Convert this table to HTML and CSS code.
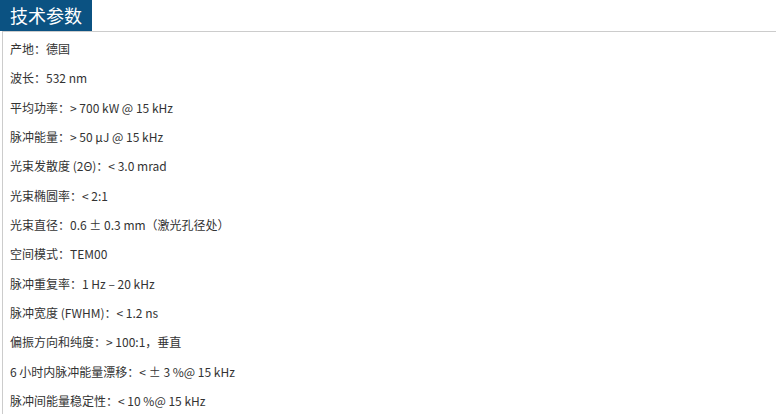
FILE: index.html
```html
<!DOCTYPE html>
<html lang="zh">
<head>
<meta charset="utf-8">
<link rel="stylesheet" href="styles.css">
</head>
<body>
<div class="spec">
  <div class="spec-head"><h2 class="spec-title">技术参数</h2></div>
  <div class="spec-body">
    <p>产地：德国</p>
    <p>波长：532 nm</p>
    <p>平均功率：&gt; 700 kW @ 15 kHz</p>
    <p>脉冲能量：&gt; 50 μJ @ 15 kHz</p>
    <p>光束发散度 (2Θ)：&lt; 3.0 mrad</p>
    <p>光束椭圆率：&lt; 2:1</p>
    <p>光束直径：0.6 ± 0.3 mm（激光孔径处）</p>
    <p>空间模式：TEM00</p>
    <p>脉冲重复率：1 Hz – 20 kHz</p>
    <p>脉冲宽度 (FWHM)：&lt; 1.2 ns</p>
    <p>偏振方向和纯度：&gt; 100:1，垂直</p>
    <p>6 小时内脉冲能量漂移：&lt; ± 3 %@ 15 kHz</p>
    <p>脉冲间能量稳定性：&lt; 10 %@ 15 kHz</p>
  </div>
</div>
</body>
</html>
```
FILE: styles.css
```css
html, body {
  margin: 0;
  padding: 0;
  background: #fff;
}
body {
  font-family: "Noto Sans CJK SC", "Noto Sans", sans-serif;
  color: #333;
}
.spec-head {
  display: flex;
  height: 31px;
}
.spec-title {
  margin: 0;
  background: #0b5282;
  color: #fff;
  font-size: 18px;
  font-weight: normal;
  line-height: 31px;
  padding: 0 10px;
  white-space: nowrap;
}
.spec-body {
  margin-left: 2px;
  border-top: 1px solid #cccccc;
  border-left: 1px solid #cccccc;
  padding: 2px 0 0 7px;
}
.spec-body p {
  margin: 0;
  font-size: 12px;
  line-height: 29.33px;
}
```
